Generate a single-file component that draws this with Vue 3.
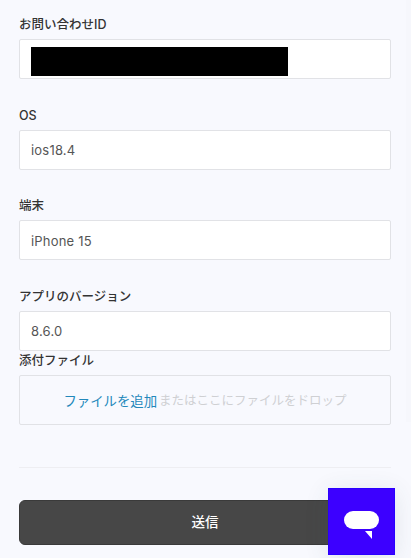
<script setup>
const fields = [
  { label: 'お問い合わせID', value: '', redacted: true },
  { label: 'OS', value: 'ios18.4' },
  { label: '端末', value: 'iPhone 15' },
  { label: 'アプリのバージョン', value: '8.6.0' },
]
</script>

<template>
  <main class="page">
    <form class="form" @submit.prevent>
      <div v-for="f in fields" :key="f.label" class="field">
        <label class="label">{{ f.label }}</label>
        <div class="input">
          {{ f.value }}
          <span v-if="f.redacted" class="redact"></span>
        </div>
      </div>
      <div class="attach">
        <label class="label">添付ファイル</label>
        <div class="drop">
          <a class="add">ファイルを追加</a><span class="hint">またはここにファイルをドロップ</span>
        </div>
      </div>
      <hr class="rule" />
      <button class="send" type="button">送信</button>
    </form>
    <div class="chat">
      <svg width="35" height="28" viewBox="0 0 35 28" aria-hidden="true">
        <rect x="0" y="0" width="35" height="18" rx="9" fill="#fff" />
        <path d="M21 20h7v8z" fill="#fff" />
      </svg>
    </div>
    <div class="edge"></div>
  </main>
</template>

<style scoped>
.page {
  position: relative;
  width: 411px;
  height: 558px;
  overflow: hidden;
  background: #f8f9fe;
  font-family: Inter, "Noto Sans CJK JP", sans-serif;
}
.form {
  display: flex;
  flex-direction: column;
  padding: 15px 20px 0 19px;
}
.field {
  display: flex;
  flex-direction: column;
  margin-bottom: 26.67px;
}
.field:nth-of-type(4) {
  margin-bottom: 0;
}
.attach {
  display: flex;
  flex-direction: column;
}
.label {
  height: 24px;
  line-height: 20px;
  font-size: 12.5px;
  font-weight: 500;
  color: #333;
}
.input {
  position: relative;
  box-sizing: border-box;
  height: 40px;
  padding: 1px 11px 0;
  display: flex;
  align-items: center;
  background: #fff;
  border: 1px solid #e1e2e6;
  border-radius: 2px;
  font-size: 13px;
  letter-spacing: 0.2px;
  color: #555;
}
.redact {
  position: absolute;
  left: 11px;
  top: 7px;
  width: 257px;
  height: 29px;
  background: #000;
}
.drop {
  box-sizing: border-box;
  height: 50px;
  display: flex;
  align-items: center;
  justify-content: center;
  border: 1px solid #e1e2e6;
  border-radius: 2px;
}
.add {
  font-size: 13.4px;
  color: #2288bb;
}
.hint {
  margin-left: 2px;
  font-size: 12.5px;
  color: #cfd0d3;
}
.rule {
  width: 100%;
  margin: 42px 0 0;
  border: 0;
  border-top: 1px solid #eeeef2;
}
.send {
  margin-top: 32px;
  height: 45px;
  padding-bottom: 3px;
  background: #474747;
  border: 1px solid #3a3a3a;
  border-radius: 6px;
  color: #fff;
  font: 500 13.5px Inter, "Noto Sans CJK JP", sans-serif;
}
.chat {
  position: absolute;
  left: 328px;
  top: 488px;
  width: 67px;
  height: 67px;
  padding: 23px 0 0 16px;
  box-sizing: border-box;
  background: #3c00ff;
  border: 1px solid #2a00ff;
  box-shadow: 0 4px 24px rgba(60, 80, 90, 0.12);
}
.chat svg {
  display: block;
  margin: -1px 0 0 -1px;
}
.edge {
  position: absolute;
  right: 0;
  top: 0;
  width: 5px;
  height: 422px;
  background: #f6f7fc;
}
</style>
